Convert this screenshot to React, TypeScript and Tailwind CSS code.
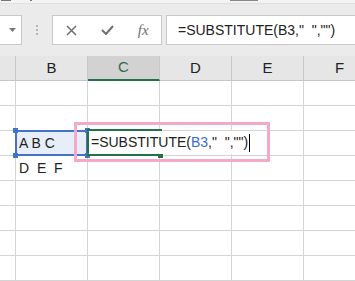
import React from "react";

const cols = ["B", "C", "D", "E", "F"];
const rows = [1, 2, 3, 4, 5, 6, 7, 8];

function Formula({ colored }: { colored?: boolean }) {
  return (
    <span className="whitespace-pre">
      {"=SUBSTITUTE("}
      <span className={colored ? "text-[#3a6fc7]" : ""}>B3</span>
      {',"  ","")'}
    </span>
  );
}

export default function App() {
  return (
    <div
      className="relative w-[355px] h-[281px] overflow-hidden bg-white text-[#222]"
      style={{ fontFamily: "'Liberation Sans', Arial, sans-serif" }}
    >
      {/* toolbar */}
      <div className="h-[56px] bg-[#ebebeb] flex flex-col">
        <div className="h-[4px] bg-[#f4f3f2] border-b border-[#e0e0e0] flex items-start">
          <div className="ml-[1px] w-[10px] h-[1px] bg-[#777]" />
          <div className="ml-[19px] w-[2px] h-[1px] bg-[#777]" />
          <div className="ml-[198px] w-[28px] h-[1px] bg-[#888]" />
        </div>
        <div className="flex items-start mt-[11px] h-[30px]">
          <div className="w-[22px] h-[30px] bg-white border border-l-0 border-[#c8c8c8] flex items-center justify-end pr-[5px]">
            <svg width="7" height="4" viewBox="0 0 7 4">
              <path d="M0 0h7L3.5 4z" fill="#777" />
            </svg>
          </div>
          <div className="w-[30px] h-[30px] flex flex-col items-center justify-center gap-[2px]">
            <div className="w-[2px] h-[2px] bg-[#b5b5b5]" />
            <div className="w-[2px] h-[2px] bg-[#b5b5b5]" />
            <div className="w-[2px] h-[2px] bg-[#b5b5b5]" />
          </div>
          <div className="w-[110px] h-[30px] bg-white border border-[#c8c8c8] flex items-center">
            <div className="w-[36px] flex justify-center ml-[1px]">
              <svg width="11" height="11" viewBox="0 0 11 11">
                <path d="M1 1l9 9M10 1l-9 9" stroke="#6f6f6f" strokeWidth="1.5" />
              </svg>
            </div>
            <div className="w-[36px] flex justify-center">
              <svg width="13" height="10" viewBox="0 0 13 10">
                <path d="M1 5l4 4 7-8" stroke="#6f6f6f" strokeWidth="2" fill="none" />
              </svg>
            </div>
            <div
              className="w-[36px] flex justify-center italic text-[15px] text-[#6f6f6f]"
              style={{ fontFamily: "'Liberation Serif', serif" }}
            >
              fx
            </div>
          </div>
          <div className="ml-[4px] flex-1 h-[30px] bg-white border border-r-0 border-[#c8c8c8] flex items-center pl-[11px] text-[14px]">
            <Formula />
          </div>
        </div>
      </div>

      {/* column headers */}
      <div className="flex h-[25px] bg-[#e6e6e6] border-b border-[#c6c6c6] text-[15px]">
        <div className="w-[16px] shrink-0 border-r border-[#c8c8c8]" />
        {cols.map((c) => (
          <div
            key={c}
            className={
              c === "C"
                ? "w-[72px] shrink-0 flex items-center justify-center bg-[#d2d2d2] text-[#2f6b48] border-r border-[#c8c8c8] border-b-2 border-b-[#217346] -mb-[1px]"
                : "w-[72px] shrink-0 flex items-center justify-center border-r border-[#c8c8c8]"
            }
          >
            {c}
          </div>
        ))}
      </div>

      {/* grid */}
      {rows.map((r) => (
        <div key={r} className="flex h-[25px] border-b border-[#d4d4d4] text-[14px]">
          <div className="w-[16px] shrink-0 border-r border-[#d4d4d4]" />
          {cols.map((c) => (
            <div
              key={c}
              className={
                "w-[72px] shrink-0 border-r border-[#d4d4d4] flex items-center pl-[3px] " +
                (r === 3 && c === "B" ? "bg-[#e8eef9]" : "")
              }
            >
              {r === 3 && c === "B" ? <span className="whitespace-pre">A B C</span> : null}
              {r === 4 && c === "B" ? <span className="whitespace-pre">D  E  F</span> : null}
            </div>
          ))}
        </div>
      ))}

      {/* selection on B3 */}
      <div className="absolute left-[15px] top-[130px] w-[73px] h-[26px] border-2 border-[#4472c4]" />
      <div className="absolute left-[13px] top-[128px] w-[5px] h-[5px] bg-[#4472c4]" />
      <div className="absolute left-[13px] top-[153px] w-[5px] h-[5px] bg-[#4472c4]" />
      <div className="absolute left-[85px] top-[128px] w-[5px] h-[5px] bg-[#4472c4]" />
      <div className="absolute left-[85px] top-[153px] w-[5px] h-[5px] bg-[#4472c4]" />

      {/* editing cell C3 */}
      <div className="absolute left-[87px] top-[129px] w-[75px] h-[2px] bg-[#217346]" />
      <div className="absolute left-[87px] top-[154px] w-[72px] h-[2px] bg-[#217346]" />
      <div className="absolute left-[158px] top-[153px] w-[5px] h-[5px] bg-[#217346]" />
      <div className="absolute left-[87px] top-[132px] w-[2px] h-[21px] bg-[#217346]" />
      <div className="absolute left-[89px] top-[131px] h-[23px] flex items-center pl-[2px] text-[14px] bg-white">
        <Formula colored />
        <span className="ml-[1px] w-[1px] h-[18px] bg-black" />
      </div>

      {/* annotation */}
      <div className="absolute left-[74px] top-[122px] w-[196px] h-[40px] border-[3px] border-[#f4a9c8]" />
    </div>
  );
}
